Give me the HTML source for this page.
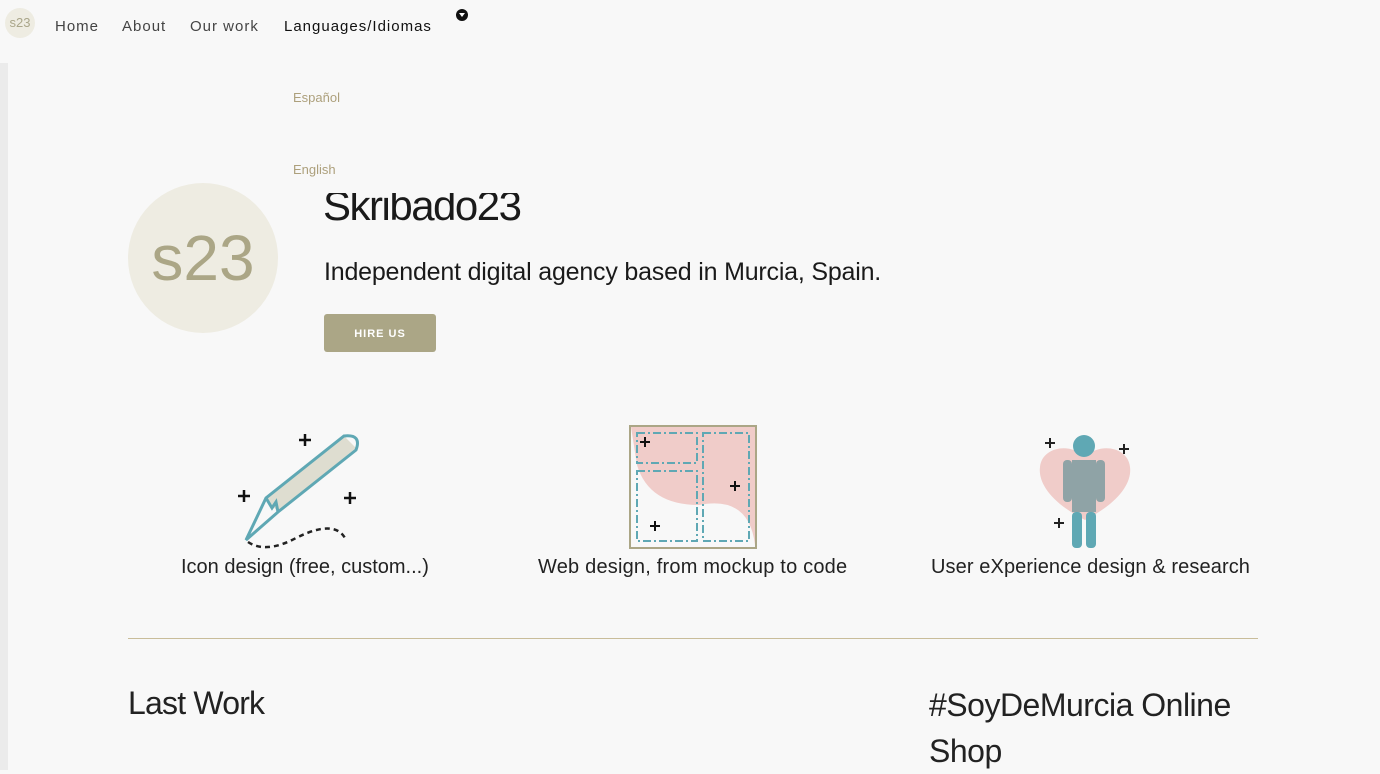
<!DOCTYPE html>
<html><head><meta charset="utf-8"><style>
*{margin:0;padding:0;box-sizing:border-box}
body{width:1380px;height:770px;overflow:hidden;background:#f8f8f8;font-family:"Liberation Sans",sans-serif;color:#222;position:relative}
.a{position:absolute;white-space:nowrap}
.nav{font-size:15px;letter-spacing:1px;color:#444;top:18px}
</style></head><body>
<div class="a" style="left:0;top:63px;width:8px;height:707px;background:#ebebeb"></div>
<div class="a" style="left:5px;top:8px;width:30px;height:30px;border-radius:50%;background:#eeece2;color:#aaa68a;font-size:13px;line-height:30px;text-align:center">s23</div>
<div class="a nav" style="left:55px">Home</div>
<div class="a nav" style="left:122px">About</div>
<div class="a nav" style="left:190px">Our work</div>
<div class="a nav" style="left:284px;color:#111">Languages/Idiomas</div>
<div class="a" style="left:456px;top:9px;width:12px;height:12px;border-radius:50%;background:#111"><div style="position:absolute;left:3px;top:4px;border-left:3px solid transparent;border-right:3px solid transparent;border-top:4px solid #fff"></div></div>

<div class="a" style="left:128px;top:183px;width:150px;height:150px;border-radius:50%;background:#eeece2;color:#aba686;font-size:64px;line-height:150px;text-align:center">s23</div>
<div class="a" style="left:323px;top:182px;font-size:42px;color:#1a1a1a;letter-spacing:-1.5px">Skribado23</div>
<div class="a" style="left:260px;top:60px;width:300px;height:133px;background:#f8f8f8"></div>
<div class="a" style="left:293px;top:90px;font-size:13px;color:#ada07c">Español</div>
<div class="a" style="left:293px;top:162px;font-size:13px;color:#ada07c">English</div>
<div class="a" style="left:324px;top:258px;font-size:25px;color:#1a1a1a;letter-spacing:-0.2px">Independent digital agency based in Murcia, Spain.</div>
<div class="a" style="left:324px;top:314px;width:112px;height:38px;background:#aba686;border-radius:3px;color:#fff;font-size:11px;font-weight:bold;letter-spacing:1px;text-align:center;line-height:40px">HIRE US</div>

<svg class="a" style="left:236px;top:426px" width="130" height="130" viewBox="0 0 130 130">
<path d="M30 72 L108 10 L120 22 L42 86 Z" fill="#deddd0"/>
<path d="M10 114 L30 72 L108 10 Q126 8 120 24 L42 86 Z" fill="none" stroke="#5fa8b4" stroke-width="3"/>
<path d="M30 72 L36 82 L40 76 L42 86" fill="none" stroke="#5fa8b4" stroke-width="3"/>
<path d="M12 116 Q30 128 60 112 Q100 92 110 114" fill="none" stroke="#222" stroke-width="2.5" stroke-dasharray="5 4"/>
<g stroke="#111" stroke-width="2.5"><path d="M69 8v12M63 14h12M8 64v12M2 70h12M114 66v12M108 72h12"/></g>
</svg>
<svg class="a" style="left:629px;top:425px" width="128" height="124" viewBox="0 0 128 124">
<rect x="1" y="1" width="126" height="122" fill="#f8f8f8" stroke="#aba686" stroke-width="2"/>
<path d="M2 2 H126 V120 Q120 70 70 80 Q20 80 8 40 Z" fill="#f0ccc9"/>
<g fill="none" stroke="#5fa8b4" stroke-width="2" stroke-dasharray="8 3 2 3"><rect x="8" y="8" width="60" height="30"/><rect x="8" y="46" width="60" height="70"/><rect x="74" y="8" width="46" height="108"/></g>
<g stroke="#111" stroke-width="2"><path d="M16 12v10M11 17h10M106 56v10M101 61h10M26 96v10M21 101h10"/></g>
</svg>
<svg class="a" style="left:1030px;top:432px" width="110" height="120" viewBox="0 0 110 120">
<path d="M55 88 C20 70 8 50 10 35 C12 15 40 10 55 25 C70 10 98 15 100 35 C102 50 90 70 55 88 Z" fill="#f0ccc9"/>
<circle cx="54" cy="14" r="11" fill="#5fa8b4"/>
<rect x="42" y="28" width="24" height="52" fill="#8fa3a6"/>
<rect x="33" y="28" width="9" height="42" rx="4" fill="#8fa3a6"/><rect x="66" y="28" width="9" height="42" rx="4" fill="#8fa3a6"/>
<rect x="42" y="80" width="10" height="36" rx="4" fill="#5fa8b4"/><rect x="56" y="80" width="10" height="36" rx="4" fill="#5fa8b4"/>
<g stroke="#222" stroke-width="2"><path d="M20 6v10M15 11h10M94 12v10M89 17h10M29 86v10M24 91h10"/></g>
</svg>
<div class="a" style="left:181px;top:556px;font-size:20px;letter-spacing:0">Icon design (free, custom...)</div>
<div class="a" style="left:538px;top:556px;font-size:20px;letter-spacing:0.2px">Web design, from mockup to code</div>
<div class="a" style="left:931px;top:556px;font-size:20px;letter-spacing:0.1px">User eXperience design &amp; research</div>
<div class="a" style="left:128px;top:638px;width:1130px;height:1px;background:#c9bd9a"></div>
<div class="a" style="left:128px;top:685px;font-size:32px;letter-spacing:-0.8px">Last Work</div>
<div class="a" style="left:929px;top:682px;font-size:32px;letter-spacing:-0.5px;line-height:46px;white-space:normal;width:330px">#SoyDeMurcia Online Shop</div>
</body></html>
